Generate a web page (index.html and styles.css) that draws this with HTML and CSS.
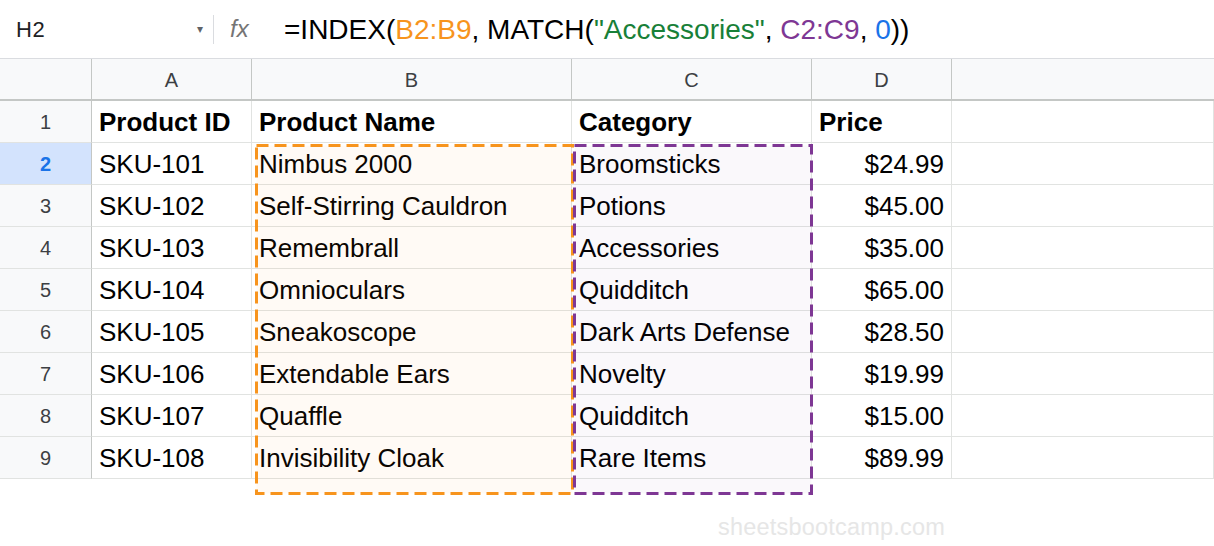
FILE: index.html
```html
<!DOCTYPE html>
<html>
<head>
<meta charset="utf-8">
<link rel="stylesheet" href="styles.css">
</head>
<body>
<div class="fbar">
  <div class="namebox"><span class="ref">H2</span><span class="caret">▾</span></div>
  <div class="sep"></div>
  <div class="fx">fx</div>
  <div class="formula">=INDEX(<span class="o">B2:B9</span>, MATCH(<span class="g">"Accessories"</span>, <span class="p">C2:C9</span>, <span class="b">0</span>))</div>
</div>
<div class="sheet">
  <div class="grid">
    <div class="ch corner"></div><div class="ch">A</div><div class="ch">B</div><div class="ch">C</div><div class="ch">D</div><div class="ch last"></div>

    <div class="rh">1</div><div class="c bold">Product ID</div><div class="c bold">Product Name</div><div class="c bold">Category</div><div class="c bold">Price</div><div class="c"></div>
    <div class="rh sel">2</div><div class="c">SKU-101</div><div class="c">Nimbus 2000</div><div class="c">Broomsticks</div><div class="c num">$24.99</div><div class="c"></div>
    <div class="rh">3</div><div class="c">SKU-102</div><div class="c">Self-Stirring Cauldron</div><div class="c">Potions</div><div class="c num">$45.00</div><div class="c"></div>
    <div class="rh">4</div><div class="c">SKU-103</div><div class="c">Remembrall</div><div class="c">Accessories</div><div class="c num">$35.00</div><div class="c"></div>
    <div class="rh">5</div><div class="c">SKU-104</div><div class="c">Omnioculars</div><div class="c">Quidditch</div><div class="c num">$65.00</div><div class="c"></div>
    <div class="rh">6</div><div class="c">SKU-105</div><div class="c">Sneakoscope</div><div class="c">Dark Arts Defense</div><div class="c num">$28.50</div><div class="c"></div>
    <div class="rh">7</div><div class="c">SKU-106</div><div class="c">Extendable Ears</div><div class="c">Novelty</div><div class="c num">$19.99</div><div class="c"></div>
    <div class="rh">8</div><div class="c">SKU-107</div><div class="c">Quaffle</div><div class="c">Quidditch</div><div class="c num">$15.00</div><div class="c"></div>
    <div class="rh">9</div><div class="c">SKU-108</div><div class="c">Invisibility Cloak</div><div class="c">Rare Items</div><div class="c num">$89.99</div><div class="c"></div>
  </div>
  <svg class="overlay" width="1214" height="460" viewBox="0 0 1214 460">
    <rect x="256.5" y="86.5" width="316" height="348" fill="rgba(247,147,30,0.045)" stroke="#f7941d" stroke-width="3" stroke-dasharray="12 6"/>
    <rect x="574.5" y="86.5" width="237" height="348" fill="rgba(126,55,148,0.035)" stroke="#7e3794" stroke-width="3" stroke-dasharray="12 6"/>
  </svg>
  <div class="watermark">sheetsbootcamp.com</div>
</div>
</body>
</html>
```
FILE: styles.css
```css
* { box-sizing: border-box; }
html, body { margin: 0; padding: 0; background: #fff; }
body { font-family: "Liberation Sans", Arial, sans-serif; color: #000; width: 1214px; height: 546px; overflow: hidden; }

.fbar {
  height: 59px;
  border-bottom: 1px solid #dadce0;
  display: flex;
  align-items: center;
}
.namebox {
  width: 213px;
  padding-left: 16px;
  padding-right: 10px;
  display: flex;
  align-items: center;
  justify-content: space-between;
}
.ref { font-size: 22px; color: #202124; letter-spacing: 0.5px; padding-top: 2px; }
.caret { font-size: 12px; color: #5f6368; }
.sep { width: 1px; height: 29px; background: #dadce0; }
.fx { font-size: 24px; font-style: italic; color: #757575; margin-left: 16px; width: 54px; }
.formula { font-size: 28px; color: #000; white-space: nowrap; padding-top: 2px; }
.o { color: #f7941d; }
.g { color: #188038; }
.p { color: #7e3794; }
.b { color: #1a73e8; }

.sheet { position: relative; height: 487px; }
.grid {
  display: grid;
  grid-template-columns: 92px 160px 320px 240px 140px 1fr;
  grid-template-rows: 42px repeat(9, 42px);
}
.ch {
  background: #f8f9fa;
  border-right: 1px solid #c4c7c5;
  border-bottom: 2px solid #c4c7c5;
  display: flex;
  align-items: center;
  justify-content: center;
  font-size: 20px;
  color: #3c4043;
  padding-top: 2px;
}
.ch.last { border-right: none; }
.rh {
  background: #f8f9fa;
  border-right: 1px solid #c4c7c5;
  border-bottom: 1px solid #e1e3e1;
  display: flex;
  align-items: center;
  justify-content: center;
  font-size: 20px;
  color: #3c4043;
  padding-top: 2px;
}
.rh.sel { background: #d3e3fd; color: #1a73e8; font-weight: bold; }
.c {
  border-right: 1px solid #e1e3e1;
  border-bottom: 1px solid #e1e3e1;
  display: flex;
  align-items: center;
  padding: 2px 7px 0 7px;
  font-size: 26px;
  white-space: nowrap;
  overflow: hidden;
}
.c.bold { font-weight: bold; }
.c.num { justify-content: flex-end; }

.overlay { position: absolute; left: 0; top: 0; pointer-events: none; }
.watermark {
  position: absolute;
  right: 269px;
  top: 455px;
  font-size: 23.5px;
  letter-spacing: 0.2px;
  color: #e6e6e6;
}
```
